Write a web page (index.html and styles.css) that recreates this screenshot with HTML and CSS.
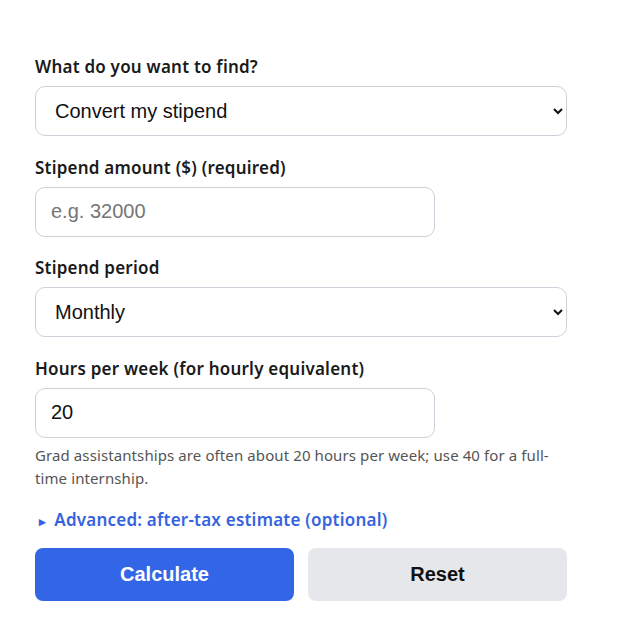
FILE: index.html
```html
<!DOCTYPE html>
<html lang="en">
<head>
<meta charset="utf-8">
<title>Stipend converter</title>
<link rel="stylesheet" href="styles.css">
</head>
<body>
<form class="calc">
  <div class="field">
    <label class="label" for="mode">What do you want to find?</label>
    <select id="mode" class="control">
      <option>Convert my stipend</option>
    </select>
  </div>
  <div class="field">
    <label class="label" for="amount">Stipend amount ($) (required)</label>
    <input id="amount" class="control short" type="text" placeholder="e.g. 32000">
  </div>
  <div class="field">
    <label class="label" for="period">Stipend period</label>
    <select id="period" class="control">
      <option>Monthly</option>
    </select>
  </div>
  <div class="field last">
    <label class="label" for="hours">Hours per week (for hourly equivalent)</label>
    <input id="hours" class="control short" type="text" value="20">
  </div>
  <p class="help">Grad assistantships are often about 20 hours per week; use 40 for a full-time internship.</p>
  <details class="advanced">
    <summary>Advanced: after-tax estimate (optional)</summary>
  </details>
  <div class="actions">
    <button type="button" class="btn primary">Calculate</button>
    <button type="reset" class="btn secondary">Reset</button>
  </div>
</form>
</body>
</html>
```
FILE: styles.css
```css
html, body {
  margin: 0;
  background: #fff;
}

body {
  padding: 55px 0 0 35px;
  font-family: "Noto Sans", "Open Sans", sans-serif;
  color: #1a1a1a;
}

.calc {
  width: 532px;
}

.field {
  display: flex;
  flex-direction: column;
  margin-bottom: 19.5px;
}

.field.last {
  margin-bottom: 6px;
}

.label {
  font-size: 17px;
  font-weight: 600;
  line-height: 24px;
  letter-spacing: 0.22px;
  margin-bottom: 7px;
  color: #1a1a1a;
}

.control {
  box-sizing: border-box;
  height: 50px;
  padding: 0 15px;
  font-family: "Liberation Sans", Arial, sans-serif;
  font-size: 20px;
  color: #111;
  background: #fff;
  border: 1px solid #cdd2da;
  border-radius: 10px;
  width: 100%;
}

.control.short {
  width: 400px;
}

.control::placeholder {
  color: #767676;
}

.help {
  margin: 0;
  font-size: 15px;
  line-height: 23px;
  letter-spacing: 0.1px;
  color: #555;
}

.advanced {
  margin-top: 18px;
}

.advanced summary {
  font-size: 17px;
  font-weight: 600;
  line-height: 24px;
  letter-spacing: 0.22px;
  color: #3563e0;
  cursor: pointer;
  list-style: none;
}

.advanced summary::before {
  content: "\25B8";
  font-size: 13px;
  margin: 0 8px 0 4px;
}

.actions {
  display: grid;
  grid-template-columns: 1fr 1fr;
  gap: 14px;
  margin-top: 15px;
}

.btn {
  height: 53px;
  border: none;
  border-radius: 8px;
  font-family: "Liberation Sans", Arial, sans-serif;
  font-size: 20px;
  font-weight: 700;
  cursor: pointer;
}

.primary {
  background: #3366e6;
  color: #fff;
}

.secondary {
  background: #e5e7eb;
  color: #111;
}
```
